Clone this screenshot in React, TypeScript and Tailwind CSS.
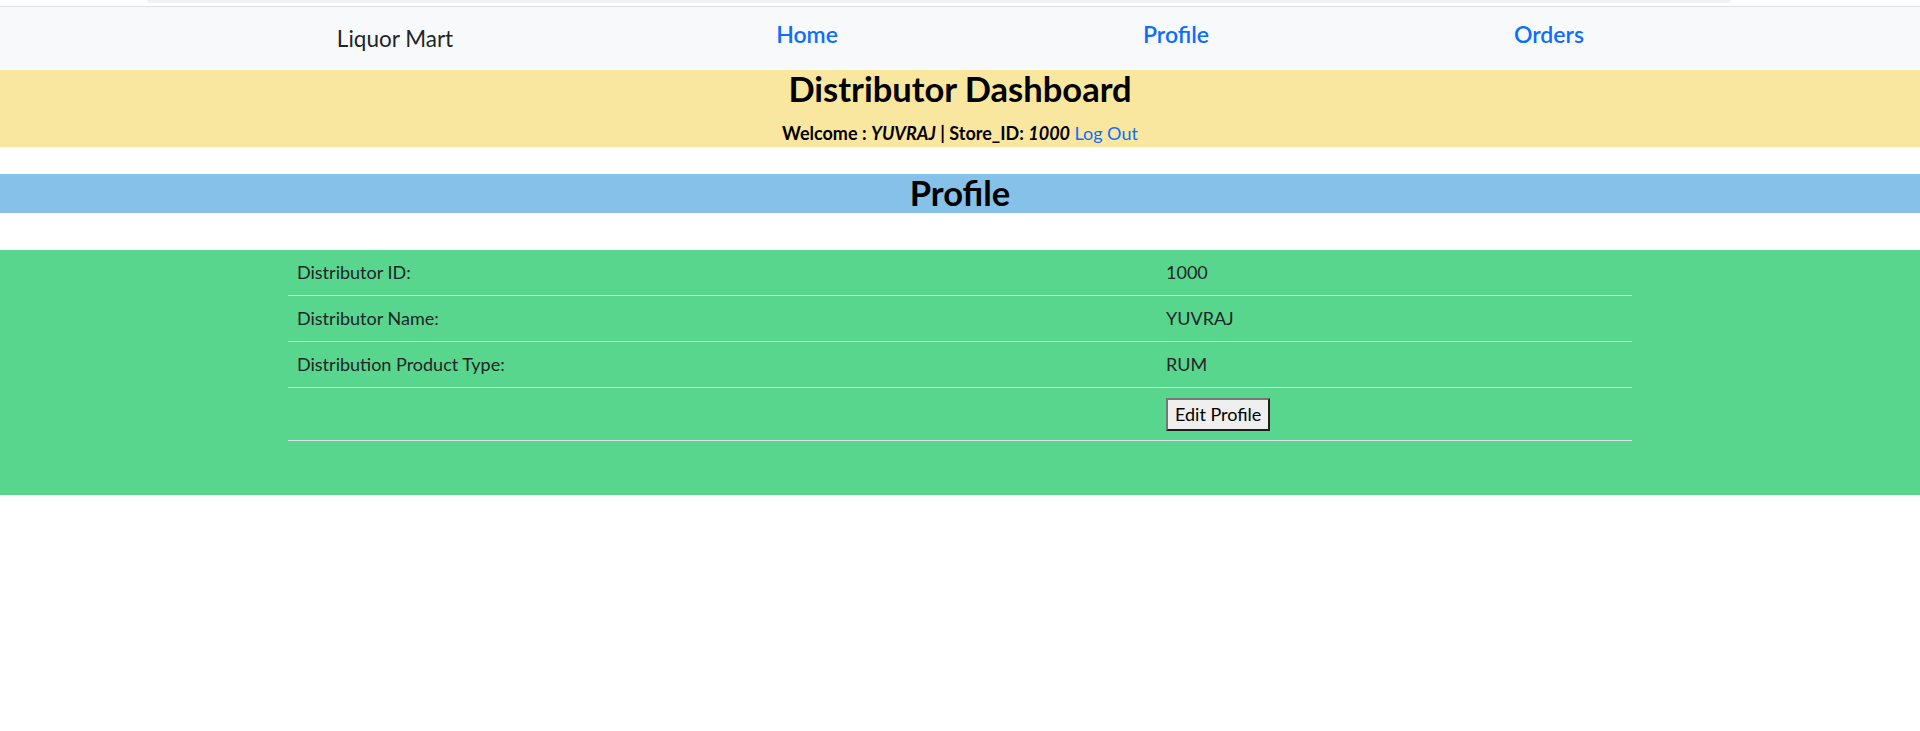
// Distributor dashboard – profile page
const rows = [
  { label: 'Distributor ID:', value: '1000' },
  { label: 'Distributor Name:', value: 'YUVRAJ' },
  { label: 'Distribution Product Type:', value: 'RUM' },
]

const links = ['Home', 'Profile', 'Orders']

function NavBar() {
  return (
    <>
      {/* faint strip above the navbar */}
      <div className="h-[6px]">
        <div className="ml-[147px] h-[3px] w-[1584px] rounded-b-full bg-[#f2f2f2]" />
      </div>
      <nav className="flex h-[64px] items-center border-t border-[#dcdee1] bg-[#f8f9fa]">
        <a href="#" className="ml-[295px] w-[200px] text-center text-[22.5px] text-[#212529]">
          Liquor Mart
        </a>
        <ul className="mb-2 ml-[212px] flex text-[23px] font-semibold text-[#0d6efd]">
          <li className="w-[200px] text-center"><a href="#">{links[0]}</a></li>
          <li className="ml-[169px] w-[200px] text-center"><a href="#">{links[1]}</a></li>
          <li className="ml-[173px] w-[200px] text-center"><a href="#">{links[2]}</a></li>
        </ul>
      </nav>
    </>
  )
}

export default function App() {
  return (
    <div className="min-h-[731px] bg-white text-[18px] leading-[1.5] text-[#212529] [font-family:Lato,sans-serif]">
      <NavBar />

      {/* header */}
      <header className="h-[77px] bg-[#f9e79f] text-center text-black">
        <h2 className="text-[34.5px] leading-[38.4px] font-bold">Distributor Dashboard</h2>
        <p className="mt-[12px] h-[26px] font-bold leading-[27px]">
          Welcome : <i>YUVRAJ</i> | Store_ID: <i>1000</i>{' '}
          <a href="#" className="font-normal text-[#0d6efd]">Log Out</a>
        </p>
      </header>

      {/* section title */}
      <div className="mt-[27px] h-[39px] bg-[#85c1e9] text-center text-black">
        <h2 className="text-[34.5px] leading-[38.4px] font-bold">Profile</h2>
      </div>

      {/* profile table */}
      <section className="mt-[37px] bg-[#58d68d] pb-[54px]">
        <div className="mx-auto w-[70%]">
          {rows.map((r) => (
            <div key={r.label} className="grid h-[46px] grid-cols-[869px_1fr] items-center border-b border-[#dee2e6]">
              <span className="px-[9px]">{r.label}</span>
              <span className="px-[9px]">{r.value}</span>
            </div>
          ))}
          <div className="grid h-[53px] grid-cols-[869px_1fr] items-center border-b border-[#dee2e6]">
            <span className="px-[9px]" />
            <span className="px-[9px]">
              <button className="h-[33px] border-2 border-t-[#767676] border-r-[#1f1f1f] border-b-[#1f1f1f] border-l-[#767676] bg-[#efefef] px-[7px] text-[18px] leading-[1.5] text-black">
                Edit Profile
              </button>
            </span>
          </div>
        </div>
      </section>
    </div>
  )
}
